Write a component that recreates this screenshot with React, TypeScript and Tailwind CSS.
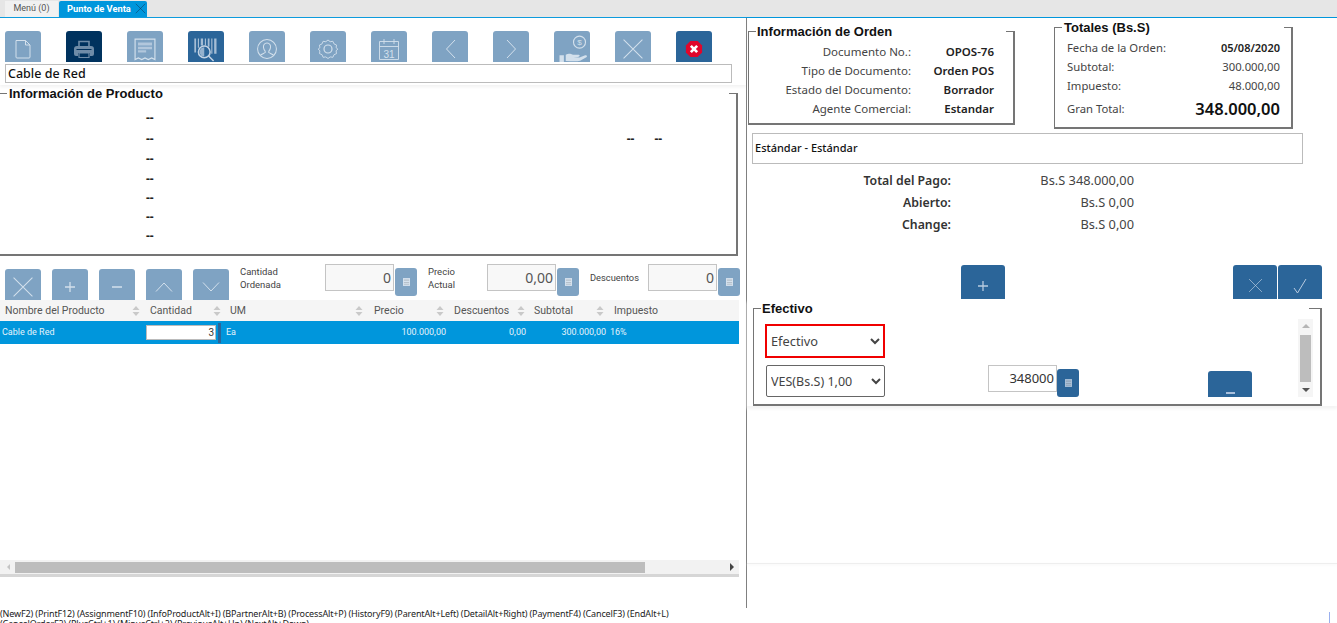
import React from 'react';

const sans = 'font-["Noto_Sans",sans-serif]';
const rob = 'font-["Roboto",sans-serif]';
const stroke = {
  fill: 'none',
  stroke: 'currentColor',
  strokeWidth: 1,
};

const Ic: React.FC<{ size?: number; children: React.ReactNode }> = ({ size = 24, children }) => (
  <svg width={size} height={size} viewBox="0 0 24 24" className="block shrink-0">
    {children}
  </svg>
);

const NewIcon = () => (
  <Ic>
    <path {...stroke} d="M5 3.500h9.500l4.500 4.500v12q0 1-1 1H6q-1 0-1-1zM14.500 3.500V8H19" />
  </Ic>
);

const PrintIcon = () => (
  <Ic>
    <path fill="none" stroke="currentColor" strokeWidth={1.6} d="M7 9V4.500h10V9" />
    <path fill="currentColor" d="M5 9h14q3 0 3 3v5q0 2-2 2h-2v-3H6v3H4q-2 0-2-2v-5q0-3 3-3z" />
    <path fill="none" stroke="currentColor" strokeWidth={1.2} d="M7 16h10v4.500H7z" />
    <path fill="none" stroke="#00305c" strokeWidth={1} d="M4.500 12.500h15" />
  </Ic>
);

const ReceiptIcon = () => (
  <Ic size={28}>
    <path {...stroke} d="M3.500 3.500h17v17.500l-2.800-1.300-2.900 1.300-2.800-1.300-2.800 1.300-2.900-1.300-2.800 1.300z" />
    <path fill="currentColor" opacity={0.6} d="M6 6.500h12v2.600H6zM6 10h12v2.200H6zM6 13h7v2H6z" />
  </Ic>
);

const BarcodeIcon = () => (
  <Ic size={28}>
    <path fill="currentColor" opacity={0.8} d="M2 3h1.500v12H2zM5 3h1v8H5zM7.500 3h2v6h-2zM11 3h1v6h-1zM13.500 3H15v7h-1.500zM16.500 3h1v13h-1zM19 3h2v13h-2z" />
    <circle {...stroke} strokeWidth={1.3} cx="10.500" cy="14.500" r="5" />
    <path fill="currentColor" opacity={0.7} d="M10.500 10.500v8a4 4 0 0 1 0-8z" />
    <path {...stroke} strokeWidth={1.3} d="m14.200 18 4.300 4.300" />
  </Ic>
);

const UserIcon = () => (
  <Ic size={22}>
    <circle {...stroke} strokeWidth={1.1} cx="12" cy="12" r="10.300" />
    <path {...stroke} strokeWidth={1.1} d="M12 5.500c-3 0-4.200 2.400-3.800 5 .3 1.900 1 3 1.800 3.800v1.700c-1.800 1-4 1.500-5.300 3M12 5.500c3 0 4.200 2.400 3.800 5-.3 1.900-1 3-1.800 3.800v1.700c1.800 1 4 1.500 5.300 3" />
  </Ic>
);

const GearIcon = () => (
  <Ic>
    <path {...stroke} strokeWidth={0.9} d="m12 3 2.200 1.700 2.700-.4 1.100 2.600 2.500 1.100-.4 2.700L21.800 12l-1.700 1.900.4 2.700-2.500 1.100-1.100 2.600-2.700-.4L12 21.500l-2.200-1.600-2.700.4L6 17.700l-2.500-1.100.4-2.700L2.200 12l1.700-1.300-.4-2.700L6 6.900l1.100-2.600 2.700.4z" />
    <circle {...stroke} strokeWidth={1.2} cx="12" cy="12" r="4" />
  </Ic>
);

const CalendarIcon = () => (
  <Ic size={24}>
    <path {...stroke} strokeWidth={0.9} d="M2.500 4.500h19v18h-19zM2.500 9.500h19M7 2v5M17 2v5" />
    <text x="12" y="20.500" textAnchor="middle" fontSize="10" fontFamily="Liberation Sans" fill="currentColor">31</text>
  </Ic>
);

const ChevronLeft = () => (
  <svg width="11" height="20" viewBox="0 0 11 20" className="block">
    <path {...stroke} d="M10 1 1.500 10l8.500 9" />
  </svg>
);

const ChevronRight = () => (
  <svg width="11" height="20" viewBox="0 0 11 20" className="block">
    <path {...stroke} d="m1 1 8.500 9L1 19" />
  </svg>
);

const PaymentIcon = () => (
  <Ic size={30}>
    <circle {...stroke} strokeWidth={0.9} cx="18" cy="6.500" r="4.800" />
    <text x="18" y="9" textAnchor="middle" fontSize="6.500" fontFamily="Liberation Sans" fill="currentColor">$</text>
    <path fill="currentColor" d="M2 17h3.500v6H2zM7 16.500c2.500-1.500 4-.5 6 0h4c1.500 0 1.500 1.500 0 1.800l-4 .2 5 .2 4.500-1.700c1.500-.3 2 .8 1 1.500l-5 2.800c-3 1-7 .5-11.500.2z" />
  </Ic>
);

const CrossIcon = ({ size = 22 }: { size?: number }) => (
  <svg width={size} height={size} viewBox="0 0 28 28" className="block">
    <path {...stroke} strokeWidth={1.300} d="m2 2 24 24M26 2 2 26" />
  </svg>
);

const StopIcon = () => (
  <svg width="18" height="18" viewBox="0 0 20 20" className="block">
    <path fill="#e0062c" d="M6 1h8l5 5v8l-5 5H6l-5-5V6z" />
    <path fill="none" stroke="#fff" strokeWidth={3} d="m6.500 6.500 7 7M13.500 6.500l-7 7" />
  </svg>
);

const PlusIcon = () => (
  <svg width="12" height="12" viewBox="0 0 12 12" className="block">
    <path stroke="currentColor" strokeWidth={1.300} d="M6 1v10M1 6h10" />
  </svg>
);

const MinusIcon = () => (
  <svg width="12" height="12" viewBox="0 0 12 12" className="block">
    <path stroke="currentColor" strokeWidth={1.300} d="M1 6h10" />
  </svg>
);

const UpIcon = () => (
  <svg width="20" height="12" viewBox="0 0 20 12" className="block">
    <path {...stroke} d="M2 10.500 10 2l8 8.500" />
  </svg>
);

const DownIcon = () => (
  <svg width="20" height="12" viewBox="0 0 20 12" className="block">
    <path {...stroke} d="m2 1.500 8 8.500 8-8.500" />
  </svg>
);

const CalcIcon = () => (
  <svg width="7" height="8" viewBox="0 0 8 9" className="block">
    <path fill="currentColor" d="M0 0h8v9H0z" />
    <path fill="#000" opacity={0.15} d="M1 1.500h6v1.500H1zM1 4.500h6v1H1zM1 6.500h6v1H1z" />
  </svg>
);

const ToolButton: React.FC<{ tone?: 'light' | 'mid' | 'dark'; children: React.ReactNode }> = ({ tone = 'light', children }) => {
  const bg = tone === 'dark' ? 'bg-[#00325e] text-[#6f8ca8]' : tone === 'mid' ? 'bg-[#2b6599] text-[#c3d3e4]' : 'bg-[#7fa3c3] text-[#d3e0ec]';
  return <div className={`flex h-[31px] w-9 shrink-0 items-center justify-center overflow-hidden rounded-t-[3px] pt-1 ${bg}`}>{children}</div>;
};

const ActionButton: React.FC<{ children: React.ReactNode; className?: string }> = ({ children, className = '' }) => (
  <div className={`flex h-[34px] w-11 shrink-0 items-center justify-center overflow-hidden rounded-t-[3px] bg-[#2b6599] pt-[7px] text-[#b8cbe0] ${className}`}>{children}</div>
);

const CalcButton: React.FC<{ dark?: boolean }> = ({ dark }) => (
  <div className={`flex h-7 w-[22px] shrink-0 items-center justify-center rounded-[3px] ${dark ? 'bg-[#2b6599] text-[#a9c0d8]' : 'bg-[#7fa3c3] text-[#d6e2ee]'}`}>
    <CalcIcon />
  </div>
);

const NumberBox: React.FC<{ value: string }> = ({ value }) => (
  <div className={`${sans} mt-2 flex h-[27px] w-[69px] shrink-0 items-center justify-end border border-[#c4c4c4] bg-[#f8f8f8] pr-[2px] text-[14px] text-[#555]`}>{value}</div>
);

const Group: React.FC<{ title: string; legendWidth: number; legendPad?: string; className: string; children: React.ReactNode }> = ({ title, legendWidth, legendPad = 'pl-[1px]', className, children }) => (
  <fieldset className={`shrink-0 border-t border-r-2 border-b-2 border-l border-[#757575] ${className}`}>
    <legend className={`ml-[7px] h-4 font-['Liberation_Sans',sans-serif] text-[13px] leading-[18px] font-bold text-[#111] ${legendPad}`} style={{ width: legendWidth }}>
      {title}
    </legend>
    {children}
  </fieldset>
);

const SortArrows = () => (
  <svg width="8" height="10" viewBox="0 0 8 10" className="block shrink-0">
    <path fill="#c9c9c9" d="m4 0 3.500 4h-7zM4 10 .5 6h7z" />
  </svg>
);

const columns = [
  { name: 'Nombre del Producto', w: 'w-[146px]', pad: 'pl-[5px] pr-[6px]' },
  { name: 'Cantidad', w: 'w-[80px]', pad: 'pl-1 pr-[5px]' },
  { name: 'UM', w: 'w-[144px]', pad: 'pl-1 pr-[7px]' },
  { name: 'Precio', w: 'w-[80px]', pad: 'pl-1 pr-[6px]' },
  { name: 'Descuentos', w: 'w-[80px]', pad: 'pl-1 pr-[5px]' },
  { name: 'Subtotal', w: 'w-[80px]', pad: 'pl-1 pr-[6px]' },
  { name: 'Impuesto', w: 'w-[129px]', pad: 'pl-1' },
];

const dashRows = ['h-[21px]', 'h-[21px]', 'h-5', 'h-[19px]', 'h-[19px]', 'h-[19px]', 'h-[19px]'];

const orderRows = [
  ['Documento No.:', 'OPOS-76'],
  ['Tipo de Documento:', 'Orden POS'],
  ['Estado del Documento:', 'Borrador'],
  ['Agente Comercial:', 'Estandar'],
];

const paymentRows = [
  ['Total del Pago:', 'Bs.S 348.000,00'],
  ['Abierto:', 'Bs.S 0,00'],
  ['Change:', 'Bs.S 0,00'],
];

export default function App() {
  return (
    <div className="flex h-[623px] w-[1337px] flex-col overflow-hidden bg-white">
      {/* tabs */}
      <div className={`${rob} flex h-[18px] shrink-0 items-end border-b border-[#0096dc] bg-[#e6e6e6] pl-[5px] text-[9px]`}>
        <div className="flex h-4 w-[53px] items-center justify-center bg-[#f1f1f1] pb-[1px] text-[#555]">Menú (0)</div>
        <div className="ml-[1px] flex h-4 w-[88px] items-center rounded-t-[2px] bg-[#0096dc] pb-[1px] pl-2 text-[9.300px] font-bold text-white">
          <span className="flex-1">Punto de Venta</span>
          <span className="mr-[1px] text-[#135]">
            <CrossIcon size={11} />
          </span>
        </div>
      </div>

      <div className="flex h-[590px] shrink-0">
        {/* left column */}
        <div className="flex w-[746px] shrink-0 flex-col">
          <div className="shadow-[0_2px_3px_#f2f2f2]">
            <div className="flex gap-[25px] pt-[13px] pl-[5px]">
              <ToolButton><NewIcon /></ToolButton>
              <ToolButton tone="dark"><PrintIcon /></ToolButton>
              <ToolButton><ReceiptIcon /></ToolButton>
              <ToolButton tone="mid"><BarcodeIcon /></ToolButton>
              <ToolButton><UserIcon /></ToolButton>
              <ToolButton><GearIcon /></ToolButton>
              <ToolButton><CalendarIcon /></ToolButton>
              <ToolButton><ChevronLeft /></ToolButton>
              <ToolButton><ChevronRight /></ToolButton>
              <ToolButton><PaymentIcon /></ToolButton>
              <ToolButton><CrossIcon /></ToolButton>
              <ToolButton tone="mid"><StopIcon /></ToolButton>
            </div>
            <div className={`${sans} mt-[2px] ml-[5px] flex h-[19px] w-[727px] items-center border border-[#bbb] pt-[1px] pl-[2px] text-[12.500px] font-medium text-[#111]`}>Cable de Red</div>
            <div className="h-[2px]" />
          </div>

          <Group title="Información de Producto" legendWidth={722} legendPad="pl-[2px]" className="-ml-px h-[171px] w-[739px]">
            <div className="mt-[6px]">
              {dashRows.map((h, i) => (
                <div key={i} className={`flex items-center pl-[146px] text-[12px] font-bold text-[#222] ${sans} ${h}`}>
                  <span>--</span>
                  {i === 1 && <span className="ml-[473px]">--</span>}
                  {i === 1 && <span className="ml-5">--</span>}
                </div>
              ))}
            </div>
          </Group>

          {/* line actions */}
          <div className="flex h-11 shrink-0 items-start pl-[5px]">
            <div className="mt-[13px] flex gap-[11px]">
              <ToolButton><CrossIcon /></ToolButton>
              <ToolButton><PlusIcon /></ToolButton>
              <ToolButton><MinusIcon /></ToolButton>
              <ToolButton><UpIcon /></ToolButton>
              <ToolButton><DownIcon /></ToolButton>
            </div>
            <div className={`${rob} mt-2 ml-[11px] flex h-[27px] w-[85px] shrink-0 items-center text-[9.500px] leading-[13px] text-[#444]`}>Cantidad<br />Ordenada</div>
            <NumberBox value="0" />
            <div className="mt-3 ml-[1px]"><CalcButton /></div>
            <div className={`${rob} mt-2 ml-[11px] flex h-[27px] w-[59px] shrink-0 items-center text-[9.500px] leading-[13px] text-[#444]`}>Precio<br />Actual</div>
            <NumberBox value="0,00" />
            <div className="mt-3 ml-[1px]"><CalcButton /></div>
            <div className={`${rob} mt-2 ml-[11px] flex h-[27px] w-[58px] shrink-0 items-center text-[9.300px] text-[#444]`}>Descuentos</div>
            <NumberBox value="0" />
            <div className="mt-3 ml-[1px]"><CalcButton /></div>
          </div>

          {/* table */}
          <div className={`${rob} h-[260px] w-[739px] shrink-0`}>
            <div className="flex h-[21px] bg-[#f5f5f5] text-[10.500px] text-[#555]">
              {columns.map((c) => (
                <div key={c.name} className={`flex items-center justify-between ${c.w} ${c.pad}`}>
                  <span>{c.name}</span>
                  {c.name !== 'Impuesto' && <SortArrows />}
                </div>
              ))}
            </div>
            <div className="flex h-[23px] items-center bg-[#0096dc] text-[9px] text-[#e4f3fb]">
              <div className="w-[146px] pl-[2px]">Cable de Red</div>
              <div className="flex w-[80px] items-center">
                <div className="flex h-[15px] w-[70px] items-center justify-end border border-[#bbb] bg-white pr-[1px] text-[10px] text-[#333]">3</div>
                <div className="ml-[2px] h-5 w-[3px] bg-[#2b6599]" />
              </div>
              <div className="w-[144px]">Ea</div>
              <div className="w-[76px] text-right">100.000,00</div>
              <div className="w-[80px] text-right">0,00</div>
              <div className="w-[80px] text-right">300.000,00</div>
              <div className="ml-1">16%</div>
            </div>
          </div>

          {/* horizontal scroll */}
          <div className="flex h-[14px] w-[739px] shrink-0 items-center bg-[#f2f2f2]">
            <svg width="15" height="8" viewBox="0 0 15 8" className="block shrink-0">
              <path fill="#c4c4c4" d="M7 4l3-3v6z" />
            </svg>
            <div className="h-[11px] w-[630px] bg-[#bdbdbd]" />
            <div className="flex flex-1 justify-end pr-[5px]">
              <svg width="4" height="8" viewBox="0 0 4 8" className="block">
                <path fill="#444" d="M4 4 0 0v8z" />
              </svg>
            </div>
          </div>
          <div className="h-[3px] w-[739px] shrink-0 bg-[#d6d6d6]" />
        </div>

        {/* right column */}
        <div className="flex flex-1 flex-col border-l border-[#808080]">
          <div className="flex h-[115px] shrink-0 items-start">
            <Group title="Información de Orden" legendWidth={250} className={`mt-[5px] ml-[1px] h-[102px] w-[267px] ${sans}`}>
              <div className="mt-[3px] flex flex-col">
                {orderRows.map(([label, value]) => (
                  <div key={label} className="flex h-[19px] items-center text-[11.500px]">
                    <span className="w-[162px] text-right text-[#444]">{label}</span>
                    <span className="w-[83px] text-right font-semibold text-[#222]">{value}</span>
                  </div>
                ))}
              </div>
            </Group>
            <Group title="Totales (Bs.S)" legendWidth={222} legendPad="pl-[2px]" className={`mt-[1px] ml-[39px] h-[110px] w-[239px] ${sans}`}>
              <div className="mt-1 flex flex-col pr-[11px] pl-3 text-[11.300px] text-[#444]">
                <div className="flex h-[19px] items-center justify-between">
                  <span>Fecha de la Orden:</span>
                  <span className="text-[11px] font-semibold text-[#222]">05/08/2020</span>
                </div>
                <div className="flex h-[19px] items-center justify-between">
                  <span>Subtotal:</span>
                  <span>300.000,00</span>
                </div>
                <div className="flex h-[19px] items-center justify-between">
                  <span>Impuesto:</span>
                  <span>48.000,00</span>
                </div>
                <div className="flex h-[27px] items-center justify-between">
                  <span>Gran Total:</span>
                  <span className="text-[16.500px] font-semibold text-[#111]">348.000,00</span>
                </div>
              </div>
            </Group>
          </div>

          <div className={`${sans} ml-[5px] flex h-[31px] w-[551px] shrink-0 items-center border border-[#bbb] pl-[2px] text-[11px] font-medium text-[#111]`}>Estándar - Estándar</div>

          <div className={`${sans} mt-[6px] flex flex-col`}>
            {paymentRows.map(([label, value]) => (
              <div key={label} className="flex h-[22px] items-center">
                <span className="w-[204px] text-right text-[12.300px] font-semibold text-[#333]">{label}</span>
                <span className="w-[183px] text-right text-[12.800px] text-[#444]">{value}</span>
              </div>
            ))}
          </div>

          <div className="mt-[29px] flex h-[34px] shrink-0">
            <ActionButton className="ml-[214px]"><PlusIcon /></ActionButton>
            <ActionButton className="ml-[228px]"><CrossIcon size={15} /></ActionButton>
            <ActionButton className="ml-[1px]">
              <svg width="14" height="16" viewBox="0 0 14 16" className="block">
                <path {...stroke} d="M1 10l3.500 5L13 1" />
              </svg>
            </ActionButton>
          </div>

          <div className="shadow-[0_3px_3px_#f4f4f4]">
            <Group title="Efectivo" legendWidth={548} className={`mt-[1px] ml-[6px] h-[106px] w-[569px] ${sans}`}>
              <div className="flex h-[81px] items-end">
                <div className="ml-[11px] flex h-[73px] w-[120px] shrink-0 flex-col justify-between">
                  <select className="h-[34px] w-full border-2 border-[#f00000] bg-white text-[12.800px] text-[#444]">
                    <option>Efectivo</option>
                  </select>
                  <select className="ml-[1px] h-8 w-[119px] rounded-[2px] border border-[#666] bg-white text-[12.500px] text-[#444]">
                    <option>VES(Bs.S) 1,00</option>
                  </select>
                </div>
                <div className="mb-[5px] ml-[103px] flex h-[27px] w-[69px] shrink-0 items-center justify-end border border-[#c4c4c4] pr-[2px] text-[13px] text-[#333]">348000</div>
                <CalcButton dark />
                <div className="ml-[129px] flex h-[26px] w-11 shrink-0 items-end justify-center rounded-t-[3px] bg-[#2b6599] text-[#a9c0dd]">
                  <div className="mb-[3px] h-[2px] w-[9px] bg-current" />
                </div>
                <div className="ml-[46px] flex h-[78px] w-[15px] shrink-0 flex-col items-center justify-between bg-[#f5f5f5] py-[5px]">
                  <svg width="8" height="4" viewBox="0 0 8 4" className="block"><path fill="#b5b5b5" d="m4 0 4 4H0z" /></svg>
                  <div className="h-[47px] w-[11px] bg-[#bdbdbd]" />
                  <svg width="8" height="4" viewBox="0 0 8 4" className="block"><path fill="#555" d="M4 4 0 0h8z" /></svg>
                </div>
              </div>
            </Group>
          </div>

          <div className="mt-[157px] h-px shrink-0 bg-[#eeeeee] shadow-[0_1px_3px_#f0f0f0]" />
        </div>
      </div>

      {/* shortcuts */}
      <div className={`${sans} flex h-[15px] shrink-0 justify-between overflow-hidden text-[9px] leading-[10px] tracking-[-0.130px] text-[#222]`}>
        <div className="pt-[1px] whitespace-nowrap">
          <div>(NewF2) (PrintF12) (AssignmentF10) (InfoProductAlt+I) (BPartnerAlt+B) (ProcessAlt+P) (HistoryF9) (ParentAlt+Left) (DetailAlt+Right) (PaymentF4) (CancelF3) (EndAlt+L)</div>
          <div>(CancelOrderF2) (PlusCtrl+1) (MinusCtrl+2) (PreviousAlt+Up) (NextAlt+Down)</div>
        </div>
        <div className="mt-1 mr-[7px] h-[11px] w-px bg-[#9ab0ee]" />
      </div>
    </div>
  );
}
